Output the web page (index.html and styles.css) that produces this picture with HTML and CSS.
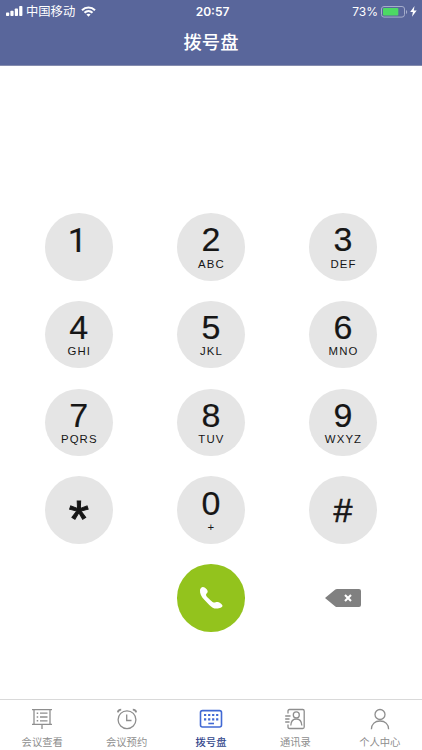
FILE: index.html
```html
<!DOCTYPE html>
<html lang="zh-CN">
<head>
<meta charset="UTF-8">
<meta name="viewport" content="width=device-width, initial-scale=1">
<title>拨号盘</title>
<link rel="stylesheet" href="styles.css">
</head>
<body>
<header class="header">
  <div class="status">
    <div class="status-left">
      <svg class="signal" width="17" height="11" viewBox="0 0 17 11" fill="#fff"><rect x="0" y="6.5" width="3.2" height="3.5" rx=".8"/><rect x="4.4" y="4.700" width="3.2" height="5.300" rx=".8"/><rect x="8.800" y="2.500" width="3.2" height="7.500" rx=".8"/><rect x="13.2" y="0" width="3.2" height="10" rx=".8"/></svg>
      <span class="carrier">中国移动</span>
      <svg class="wifi" width="15" height="11" viewBox="0 0 15 11" fill="none" stroke="#fff" stroke-width="2.100"><path d="M1 4.2C4.7.6 10.3.6 14 4.2"/><path d="M3.5 6.8C5.8 4.6 9.2 4.6 11.5 6.8"/><path d="M5.4 8.6C6.6 7.5 8.4 7.5 9.6 8.6L7.5 10.8Z" fill="#fff" stroke="none"/></svg>
    </div>
    <span class="time">20:57</span>
    <div class="status-right">
      <span class="percent">73%</span>
      <svg class="battery" width="27" height="12" viewBox="0 0 27 12"><rect x=".5" y=".5" width="23" height="10.6" rx="2.5" fill="none" stroke="#a5adcb"/><rect x="2" y="2" width="15.3" height="7.6" rx=".8" fill="#4cd964"/><path d="M25 4v4c1.6-.7 1.6-3.3 0-4z" fill="#a5adcb"/></svg>
      <svg class="bolt" width="7" height="11" viewBox="0 0 7 11" fill="#fff"><path d="M4.5 0 .2 6h2.7L2 10.8 6.7 4.6H3.8z"/></svg>
    </div>
  </div>
  <h1 class="title">拨号盘</h1>
</header>
<main class="dialer">
  <div class="pad">
    <button class="key key-one"><span class="digit digit-one">1</span></button>
    <button class="key"><span class="digit">2</span><span class="letters">ABC</span></button>
    <button class="key"><span class="digit">3</span><span class="letters">DEF</span></button>
    <button class="key"><span class="digit">4</span><span class="letters">GHI</span></button>
    <button class="key"><span class="digit">5</span><span class="letters">JKL</span></button>
    <button class="key"><span class="digit">6</span><span class="letters">MNO</span></button>
    <button class="key"><span class="digit">7</span><span class="letters">PQRS</span></button>
    <button class="key"><span class="digit">8</span><span class="letters">TUV</span></button>
    <button class="key"><span class="digit">9</span><span class="letters">WXYZ</span></button>
    <button class="key key-star"><span class="star">*</span></button>
    <button class="key"><span class="digit">0</span><span class="letters">+</span></button>
    <button class="key key-hash"><span class="digit">#</span></button>
    <button class="key key-call" aria-label="call">
      <svg width="24" height="24" viewBox="0 0 24 24" fill="#fff"><path d="M1 4C1.200 2.300 2.600.8 4 .9 6 1 8.700 3.700 8.700 5.400 8.700 6.800 7 7.500 7 8.700c0 1.200 1.400 2.500 3 4.100s3.300 3.300 4.600 3.600c1.500.3 2.100-.5 3.700-.5 2.200 0 5.200 2.400 5.200 3.900 0 1.700-3.200 2.900-6 2.800-2.900-.1-4.800-1.300-7.200-3.700l-5-5.200C2.300 11 .7 7 1 4z"/></svg>
    </button>
    <button class="key key-delete" aria-label="delete">
      <svg width="36" height="18" viewBox="0 0 36 18"><path d="M0 9 10.300.6Q11 0 12 0H34Q36 0 36 2V16Q36 18 34 18H12Q11 18 10.300 17.400Z" fill="#808080"/><path d="m20 6 6 6m0-6-6 6" stroke="#fff" stroke-width="2.100"/></svg>
    </button>
  </div>
</main>
<nav class="tabs">
  <a class="tab">
    <svg width="24" height="24" viewBox="0 0 24 24" fill="none" stroke="#8e8e8e" stroke-width="1.300"><path d="M2 2.700h20M2 17.300h20M4 2.700v14.600M20 2.700v14.600M12 17.300V22M10 6.200h7.500M10 10h7.500M10 13.800h7.500"/><path d="M6.700 6.200h1.500M6.700 10h1.500M6.700 13.800h1.500" stroke-width="1.600"/></svg>
    <span class="label">会议查看</span>
  </a>
  <a class="tab">
    <svg width="24" height="24" viewBox="0 0 24 24" fill="none" stroke="#8e8e8e" stroke-width="1.300"><circle cx="12" cy="12.700" r="8.900"/><path d="M11.700 7.500v6h4.800"/><path d="M2.900 5.400C3 3.700 4.300 2.600 6.200 2.600M21.100 5.400c-.1-1.700-1.400-2.800-3.300-2.800" stroke-width="1.900"/></svg>
    <span class="label">会议预约</span>
  </a>
  <a class="tab tab-active">
    <svg width="24" height="24" viewBox="0 0 24 24" fill="none" stroke="#4169d4" stroke-width="1.600"><rect x="1.500" y="3.600" width="21" height="16.400" rx="2"/><path d="M5 8h2.200M9.100 8h2.200M13.100 8h2.200M17.100 8h2.200M5 12.400h2.200M9.100 12.400h2.200M13.100 12.400h2.200M17.100 12.400h2.200" stroke-width="2.200"/><path d="M9.300 16.500h5.700"/></svg>
    <span class="label">拨号盘</span>
  </a>
  <a class="tab">
    <svg width="24" height="24" viewBox="0 0 24 24" fill="none" stroke="#8e8e8e" stroke-width="1.300"><path d="M5 6.500V4q0-1.500 1.500-1.500h13.200q1.500 0 1.500 1.500v16q0 1.500-1.500 1.500H6.500Q5 21.500 5 20v-2.500M2.200 9h5.300M2.200 12h4.300M2.200 15h4.300"/><circle cx="13.300" cy="7.900" r="3"/><path d="M7.800 18.500C8 14 10 12 13.300 12s5.300 2 5.500 6.500"/></svg>
    <span class="label">通讯录</span>
  </a>
  <a class="tab">
    <svg width="24" height="24" viewBox="0 0 24 24" fill="none" stroke="#8e8e8e" stroke-width="1.300"><circle cx="12" cy="7.500" r="5"/><path d="M3.400 22.200C3.500 17 7 14 12 14s8.500 3 8.600 8.200"/></svg>
    <span class="label">个人中心</span>
  </a>
</nav>
</body>
</html>
```
FILE: styles.css
```css
* {
  box-sizing: border-box;
}

body {
  margin: 0;
  height: 750px;
  display: flex;
  flex-direction: column;
  background: #fff;
  color: #161616;
  font-family: "Liberation Sans", "Noto Sans CJK SC", sans-serif;
  overflow: hidden;
}

.header {
  height: 66px;
  flex: none;
  background: #59669b;
  border-bottom: 1px solid #858cae;
  color: #fff;
}

.status {
  height: 22px;
  display: grid;
  grid-template-columns: 1fr auto 1fr;
  align-items: center;
  padding: 0 5px 0 6px;
  font-family: Inter, "Noto Sans CJK SC", sans-serif;
  font-size: 12px;
  line-height: 22px;
}

.status-left,
.status-right {
  display: flex;
  align-items: center;
}

.status-right {
  justify-content: flex-end;
}

.carrier {
  margin-left: 3px;
  padding-top: 1px;
  font-size: 12.3px;
}

.wifi {
  margin: 0 0 1px 6px;
}

.time {
  padding-left: 2px;
  font-weight: 600;
  font-size: 12px;
}

.percent {
  font-size: 12px;
}

.battery {
  margin: 0 2px 0 3px;
}

.title {
  margin: 0;
  font-size: 18.3px;
  font-weight: 500;
  line-height: 42px;
  text-align: center;
}

.dialer {
  flex: 1;
  padding: 147px 0 0 45px;
}

.pad {
  display: grid;
  grid-template-columns: repeat(3, 67.6px);
  grid-auto-rows: 67.6px;
  gap: 20.2px 64.5px;
}

.key {
  display: flex;
  flex-direction: column;
  align-items: center;
  padding: 7.4px 0 0;
  border: 0;
  border-radius: 50%;
  background: #e5e5e5;
  color: inherit;
  font-family: inherit;
}

.key-one {
  padding-top: 8px;
}

.digit {
  font-size: 34px;
  line-height: 38px;
  -webkit-text-stroke: 0.2px #161616;
}

.digit-one {
  padding-right: 3px;
  font-family: Roboto, sans-serif;
}

.letters {
  margin-top: -1.8px;
  padding-left: 1px;
  font-size: 11.4px;
  line-height: 14px;
  letter-spacing: 1.1px;
}

.key-hash {
  padding-top: 15px;
}

.key-hash .digit {
  -webkit-text-stroke-width: 0.6px;
}

.key-star {
  padding-top: 12px;
}

.star {
  font-size: 52px;
  line-height: 62px;
  -webkit-text-stroke: 1px #161616;
}

.key-call {
  grid-column: 2;
  justify-content: center;
  padding: 0;
  background: #93c31d;
}

.key-delete {
  justify-content: center;
  padding: 0;
  background: none;
}

.tabs {
  height: 51px;
  flex: none;
  display: grid;
  grid-template-columns: repeat(5, 1fr);
  border-top: 1px solid #d9d9d9;
  color: #8e8e8e;
}

.tab {
  display: flex;
  flex-direction: column;
  align-items: center;
  padding-top: 7px;
}

.label {
  margin-top: 4px;
  font-size: 10.3px;
  line-height: 16px;
}

.tab-active {
  color: #35498d;
}

.tab-active .label {
  font-weight: 500;
}
```
